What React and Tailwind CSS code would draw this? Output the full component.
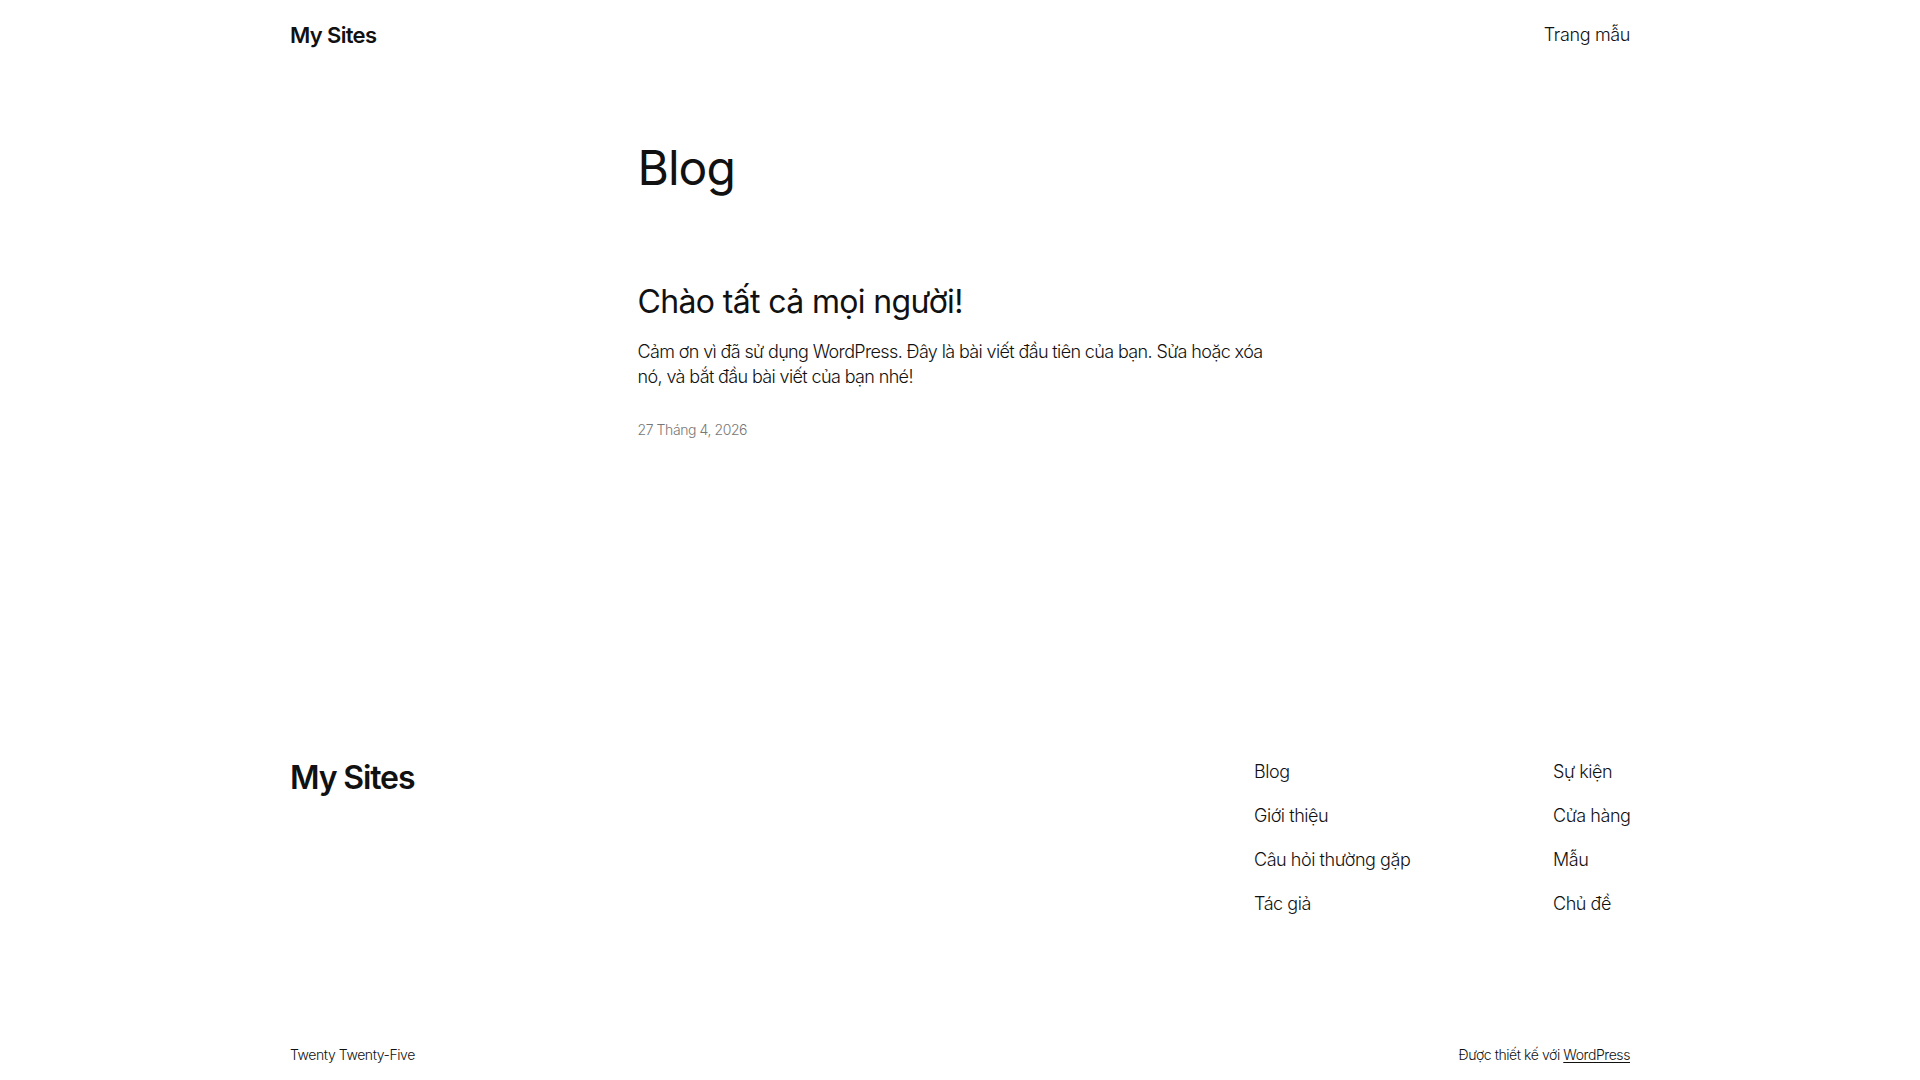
import * as React from "react"

const footerLinks = [
  ["Blog", "Giới thiệu", "Câu hỏi thường gặp", "Tác giả"],
  ["Sự kiện", "Cửa hàng", "Mẫu", "Chủ đề"],
]

export default function App() {
  return (
    <div className="min-h-screen bg-white text-[#111111] font-light font-['Inter','Noto_Sans',sans-serif]">
      {/* header */}
      <header className="mx-auto flex h-[70px] w-[1340px] items-center justify-between">
        <a href="#" className="text-[22px] font-semibold leading-none tracking-[-0.03em]">My Sites</a>
        <nav>
          <a href="#" className="text-[18px] leading-none tracking-[-0.02em]">Trang mẫu</a>
        </nav>
      </header>

      {/* main */}
      <main className="mx-auto w-[645px] pt-[69px]">
        <h1 className="text-[48px] font-normal leading-[1.2] tracking-[-0.02em]">Blog</h1>

        <article className="mt-[86px]">
          <h2 className="text-[32px] font-normal leading-[1.2] tracking-[-0.02em]">
            <a href="#">Chào tất cả mọi người!</a>
          </h2>
          <p className="mt-[18px] text-[18px] leading-[25px] tracking-[-0.035em]">
            Cảm ơn vì đã sử dụng WordPress. Đây là bài viết đầu tiên của bạn. Sửa hoặc xóa nó, và bắt đầu bài viết của bạn nhé!
          </p>
          <div className="mt-[31px] text-[14px] leading-[20px] tracking-[-0.03em] text-[#777777]">27 Tháng 4, 2026</div>
        </article>
      </main>

      {/* footer */}
      <footer className="mx-auto mt-[318px] w-[1340px]">
        <div className="flex items-start justify-between">
          <a href="#" className="mt-[1px] text-[32px] font-semibold leading-[1.2] tracking-[-0.035em]">My Sites</a>
          <div className="flex pt-[1px]">
            {footerLinks.map((col, i) => (
              <ul key={i} className={i === 0 ? "flex w-[299px] flex-col gap-[19px]" : "flex w-[77px] flex-col gap-[19px]"}>
                {col.map((label) => (
                  <li key={label} className="text-[18px] leading-[25px] tracking-[-0.025em] whitespace-nowrap">
                    <a href="#">{label}</a>
                  </li>
                ))}
              </ul>
            ))}
          </div>
        </div>

        <div className="mt-[129px] flex items-center justify-between text-[14px] leading-[20px] tracking-[-0.03em]">
          <span>Twenty Twenty-Five</span>
          <span>
            Được thiết kế với <a href="#" className="underline underline-offset-2">WordPress</a>
          </span>
        </div>
      </footer>
    </div>
  )
}
